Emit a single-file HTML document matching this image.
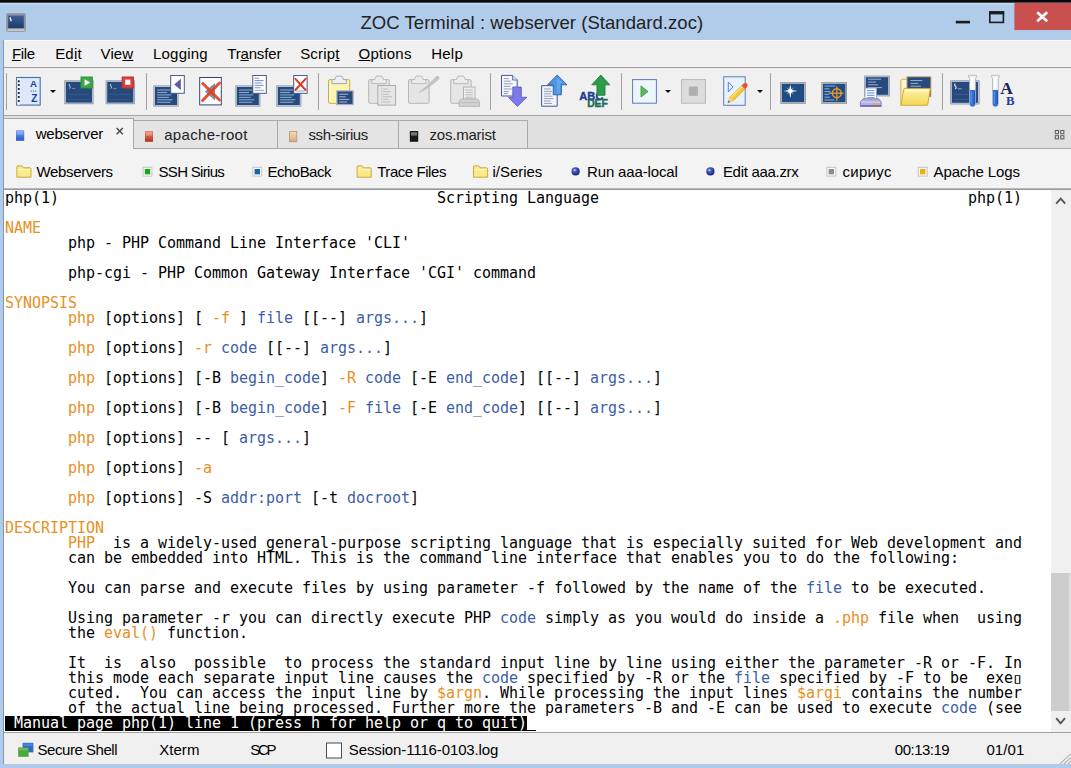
<!DOCTYPE html>
<html><head><meta charset="utf-8"><title>ZOC Terminal : webserver (Standard.zoc)</title>
<style>
html,body{margin:0;padding:0}
body{width:1071px;height:768px;overflow:hidden;position:relative;background:#b0ccea;font-family:'Liberation Sans', sans-serif}
.abs{position:absolute}
.lb{position:absolute;white-space:pre;line-height:normal}
.lb u{text-decoration:underline;text-underline-offset:1px}
#topblk{left:0;top:0;width:1071px;height:5px;background:linear-gradient(#0a0a0a 0,#0a0a0a 2.2px,#7f93aa 2.8px,#c2d8f1 3.4px,#b9d2ee 5px)}
#frameL{left:3px;top:40px;width:1px;height:724px;background:#8296ad}
#menubar{left:4px;top:40px;width:1067px;height:27px;background:#f1f1f1;border-top:1px solid #fafafa;box-sizing:border-box}
#menuline{left:4px;top:67px;width:1067px;height:1px;background:#9a9a9a}
#toolbar{left:4px;top:68px;width:1067px;height:47px;background:#f0f0f0}
#toolline{left:4px;top:115px;width:1067px;height:1px;background:#a6a6a6}
#tabbar{left:4px;top:116px;width:1067px;height:32px;background:#e0e0e0}
#tabline{left:4px;top:148px;width:1067px;height:1px;background:#a9a9a9}
#bmbar{left:4px;top:149px;width:1067px;height:39px;background:#f3f3f3}
#bmline{left:4px;top:188px;width:1067px;height:2px;background:linear-gradient(#c4c4c4,#8e8e8e);z-index:2}
#term{left:4px;top:189px;width:1047px;height:543px;background:#fff;overflow:hidden;font-family:'DejaVu Sans Mono', 'Liberation Mono', monospace;font-size:15px;letter-spacing:-0.031px;color:#000}
.row{position:absolute;left:1px;height:15px;line-height:15px;white-space:pre;margin-top:0px}
.o{color:#e8901c}.b{color:#3c5ea6}
.inv{background:#000;color:#fff;display:inline-block;height:15px}
.cur{display:inline-block;height:14px;border-bottom:1px solid #000;vertical-align:top}
.bx{font-size:14px;letter-spacing:0;display:inline-block;width:9px;text-align:center;transform:scaleX(1.45)}
#sbar{left:1051px;top:189px;width:20px;height:543px;background:#f0f0f0}
#thumb{left:1051px;top:573px;width:20px;height:138px;background:linear-gradient(90deg,#cdcdcd 0,#cdcdcd 18px,#dedede 18.5px)}
#termline{left:4px;top:732px;width:1067px;height:1px;background:#a0a0a0}
#status{left:4px;top:733px;width:1067px;height:31px;background:#f0f0f0}
.tab{position:absolute;top:120px;height:28px;background:#e4e4e4;border:1px solid #a9a9a9;border-bottom:none;box-sizing:border-box}
#tabA{position:absolute;left:4px;top:118px;width:130px;height:31px;background:#f3f3f3;border:1px solid #a9a9a9;border-bottom:none;border-left:none;box-sizing:border-box}
.sep{position:absolute;top:73px;width:1px;height:37px;background:#a0a0a0}
.dd{position:absolute;width:0;height:0;border-left:3px solid transparent;border-right:3px solid transparent;border-top:3.4px solid #111}
svg{position:absolute;overflow:visible}
</style></head>
<body>
<div class="abs" id="topblk"></div>
<div class="abs" id="frameL"></div>
<div class="abs" id="menubar"></div><div class="abs" id="menuline"></div>
<div class="abs" id="toolbar"></div><div class="abs" id="toolline"></div>
<div class="abs" id="tabbar"></div><div class="abs" id="tabline"></div>
<div class="abs" id="bmbar"></div><div class="abs" id="bmline"></div>
<div class="tab" style="left:133px;width:145px"></div><div class="tab" style="left:277px;width:122px"></div><div class="tab" style="left:398px;width:130px"></div>
<div id="tabA"></div>
<div class="abs" id="term">
<div class="row" style="top:2px">php(1)                                          Scripting Language                                         php(1)</div>
<div class="row" style="top:32px"><span class="o">NAME</span></div>
<div class="row" style="top:47px">       php - PHP Command Line Interface &#x27;CLI&#x27;</div>
<div class="row" style="top:77px">       php-cgi - PHP Common Gateway Interface &#x27;CGI&#x27; command</div>
<div class="row" style="top:107px"><span class="o">SYNOPSIS</span></div>
<div class="row" style="top:122px">       <span class="o">php</span> [options] [ <span class="o">-f</span> ] <span class="b">file</span> [[--] <span class="b">args...</span>]</div>
<div class="row" style="top:152px">       <span class="o">php</span> [options] <span class="o">-r</span> <span class="b">code</span> [[--] <span class="b">args...</span>]</div>
<div class="row" style="top:182px">       <span class="o">php</span> [options] [-B <span class="b">begin_code</span>] <span class="o">-R</span> <span class="b">code</span> [-E <span class="b">end_code</span>] [[--] <span class="b">args...</span>]</div>
<div class="row" style="top:212px">       <span class="o">php</span> [options] [-B <span class="b">begin_code</span>] <span class="o">-F</span> <span class="b">file</span> [-E <span class="b">end_code</span>] [[--] <span class="b">args...</span>]</div>
<div class="row" style="top:242px">       <span class="o">php</span> [options] -- [ <span class="b">args...</span>]</div>
<div class="row" style="top:272px">       <span class="o">php</span> [options] <span class="o">-a</span></div>
<div class="row" style="top:302px">       <span class="o">php</span> [options] -S <span class="b">addr:port</span> [-t <span class="b">docroot</span>]</div>
<div class="row" style="top:332px"><span class="o">DESCRIPTION</span></div>
<div class="row" style="top:347px">       <span class="o">PHP</span>  is a widely-used general-purpose scripting language that is especially suited for Web development and</div>
<div class="row" style="top:362px">       can be embedded into HTML. This is the command line interface that enables you to do the following:</div>
<div class="row" style="top:392px">       You can parse and execute files by using parameter -f followed by the name of the <span class="b">file</span> to be executed.</div>
<div class="row" style="top:422px">       Using parameter -r you can directly execute PHP <span class="b">code</span> simply as you would do inside a <span class="o">.php</span> file when  using</div>
<div class="row" style="top:437px">       the <span class="o">eval()</span> function.</div>
<div class="row" style="top:467px">       It  is  also  possible  to process the standard input line by line using either the parameter -R or -F. In</div>
<div class="row" style="top:482px">       this mode each separate input line causes the <span class="b">code</span> specified by -R or the <span class="b">file</span> specified by -F to be  exe<span class="bx">▯</span></div>
<div class="row" style="top:497px">       cuted.  You can access the input line by <span class="o">$argn</span>. While processing the input lines <span class="o">$argi</span> contains the number</div>
<div class="row" style="top:512px">       of the actual line being processed. Further more the parameters -B and -E can be used to execute <span class="b">code</span> (see</div>
<div class="row" style="top:527px"><span class="inv"> Manual page php(1) line 1 (press h for help or q to quit)</span><span class="cur"> </span></div>
</div>
<div class="abs" id="sbar"></div><div class="abs" id="thumb"></div>
<div class="abs" id="termline"></div><div class="abs" id="status"></div>
<div class="sep" style="left:6px"></div>
<div class="sep" style="left:146px"></div>
<div class="sep" style="left:318px"></div>
<div class="sep" style="left:490px"></div>
<div class="sep" style="left:621px"></div>
<div class="sep" style="left:770px"></div>
<div class="sep" style="left:942px"></div>
<div class="dd" style="left:50.4px;top:90px"></div>
<div class="dd" style="left:665.4px;top:90px"></div>
<div class="dd" style="left:756.5px;top:90px"></div>
<svg class="tbicons" style="left:0;top:0" width="1071" height="768" viewBox="0 0 1071 768" >
<rect x="16.60" y="77.50" width="23.60" height="27.60" fill="#dbe9f9" stroke="#4c6db0" stroke-width="1.1"/>
<rect x="17.10" y="78.00" width="3.20" height="26.60" fill="#eef5fd"/>
<rect x="17.80" y="80.40" width="1.90" height="1.80" fill="#15181f"/>
<line x1="15.60" y1="81.30" x2="17.80" y2="81.30" stroke="#b8bec8" stroke-width="0.9"/>
<rect x="17.80" y="84.10" width="1.90" height="1.80" fill="#15181f"/>
<line x1="15.60" y1="85.00" x2="17.80" y2="85.00" stroke="#b8bec8" stroke-width="0.9"/>
<rect x="17.80" y="88.10" width="1.90" height="1.80" fill="#15181f"/>
<line x1="15.60" y1="89.00" x2="17.80" y2="89.00" stroke="#b8bec8" stroke-width="0.9"/>
<rect x="17.80" y="92.10" width="1.90" height="1.80" fill="#15181f"/>
<line x1="15.60" y1="93.00" x2="17.80" y2="93.00" stroke="#b8bec8" stroke-width="0.9"/>
<rect x="17.80" y="96.10" width="1.90" height="1.80" fill="#15181f"/>
<line x1="15.60" y1="97.00" x2="17.80" y2="97.00" stroke="#b8bec8" stroke-width="0.9"/>
<rect x="17.80" y="100.10" width="1.90" height="1.80" fill="#15181f"/>
<line x1="15.60" y1="101.00" x2="17.80" y2="101.00" stroke="#b8bec8" stroke-width="0.9"/>
<text x="33.40" y="87.30" font-size="9.6" font-weight="bold" font-family="'Liberation Sans',sans-serif" fill="#1f3f9c" text-anchor="middle">A</text>
<rect x="30.70" y="90.60" width="1.00" height="1.20" fill="#3d62b4"/>
<rect x="32.90" y="90.60" width="1.00" height="1.20" fill="#3d62b4"/>
<rect x="35.10" y="90.60" width="1.00" height="1.20" fill="#3d62b4"/>
<text x="34.30" y="101.90" font-size="10" font-weight="bold" font-family="'Liberation Sans',sans-serif" fill="#1f3f9c" text-anchor="middle">Z</text>
<rect x="64.30" y="80.30" width="29.30" height="23.90" fill="#8f9bae"/>
<rect x="65.20" y="81.20" width="27.50" height="22.10" fill="#c6d1e0"/>
<rect x="65.90" y="81.90" width="26.10" height="20.70" fill="#27497b"/>
<path d="M69.70 83.90 q-1.4 0.9 0 2.2 q1.4 1.1 -0.2 2.4" fill="none" stroke="#d4deee" stroke-width="0.95"/>
<line x1="71.80" y1="88.60" x2="75.30" y2="88.60" stroke="#7f97bd" stroke-width="0.8"/>
<line x1="68.30" y1="94.30" x2="88.60" y2="94.30" stroke="#3d5f92" stroke-width="0.8"/>
<line x1="68.30" y1="99.30" x2="88.60" y2="99.30" stroke="#3d5f92" stroke-width="0.8"/>
<rect x="81.00" y="77.00" width="11.40" height="11.00" fill="#3aa84a"/>
<rect x="81.00" y="77.00" width="11.40" height="11.00" fill="none" stroke="#2f9640" stroke-width="1"/>
<path d="M84.6 79.2 L90.2 82.5 L84.6 85.8 Z" fill="#ffffff"/>
<rect x="105.60" y="80.30" width="29.30" height="23.90" fill="#8f9bae"/>
<rect x="106.50" y="81.20" width="27.50" height="22.10" fill="#c6d1e0"/>
<rect x="107.20" y="81.90" width="26.10" height="20.70" fill="#27497b"/>
<path d="M111.00 83.90 q-1.4 0.9 0 2.2 q1.4 1.1 -0.2 2.4" fill="none" stroke="#d4deee" stroke-width="0.95"/>
<line x1="113.10" y1="88.60" x2="116.60" y2="88.60" stroke="#7f97bd" stroke-width="0.8"/>
<line x1="109.60" y1="94.30" x2="129.90" y2="94.30" stroke="#3d5f92" stroke-width="0.8"/>
<line x1="109.60" y1="99.30" x2="129.90" y2="99.30" stroke="#3d5f92" stroke-width="0.8"/>
<rect x="122.20" y="77.00" width="11.20" height="11.00" fill="#d9403a"/>
<rect x="122.20" y="77.00" width="11.20" height="11.00" fill="none" stroke="#c8302c" stroke-width="1"/>
<rect x="125.20" y="79.60" width="5.20" height="5.20" fill="#ffffff"/>
<rect x="153.40" y="85.40" width="25.20" height="21.20" fill="#8f9bae"/>
<rect x="154.30" y="86.30" width="23.40" height="19.40" fill="#c6d1e0"/>
<rect x="155.00" y="87.00" width="22.00" height="18.00" fill="#27497b"/>
<line x1="157.20" y1="90.00" x2="170.23" y2="90.00" stroke="#8fb0d8" stroke-width="1.0"/>
<line x1="157.20" y1="92.45" x2="167.22" y2="92.45" stroke="#8fb0d8" stroke-width="1.0"/>
<line x1="157.20" y1="94.90" x2="171.40" y2="94.90" stroke="#8fb0d8" stroke-width="1.0"/>
<line x1="157.20" y1="97.35" x2="168.89" y2="97.35" stroke="#8fb0d8" stroke-width="1.0"/>
<line x1="157.20" y1="99.80" x2="172.56" y2="99.80" stroke="#8fb0d8" stroke-width="1.0"/>
<line x1="157.20" y1="102.25" x2="170.56" y2="102.25" stroke="#8fb0d8" stroke-width="1.0"/>
<rect x="170.70" y="75.50" width="13.60" height="17.80" fill="#ffffff" stroke="#4a5a8c" stroke-width="1"/>
<path d="M174.2 84.4 L180.8 78.8 L180.8 90 Z" fill="#5c5aa6"/>
<rect x="199.70" y="77.50" width="21.60" height="27.40" fill="#ffffff" stroke="#2f4478" stroke-width="1"/>
<path d="M204.8 91.6 L215 83 L215 100.6 Z" fill="#6f7fb6" opacity="0.9"/>
<line x1="202.80" y1="83.50" x2="219.40" y2="100.00" stroke="#e2401c" stroke-width="3.0" opacity="0.9" stroke-linecap="round"/>
<line x1="219.40" y1="83.00" x2="202.60" y2="100.50" stroke="#e2401c" stroke-width="3.0" opacity="0.9" stroke-linecap="round"/>
<rect x="235.30" y="85.40" width="25.10" height="21.20" fill="#8f9bae"/>
<rect x="236.20" y="86.30" width="23.30" height="19.40" fill="#c6d1e0"/>
<rect x="236.90" y="87.00" width="21.90" height="18.00" fill="#27497b"/>
<line x1="239.10" y1="90.00" x2="252.05" y2="90.00" stroke="#8fb0d8" stroke-width="1.0"/>
<line x1="239.10" y1="92.45" x2="249.06" y2="92.45" stroke="#8fb0d8" stroke-width="1.0"/>
<line x1="239.10" y1="94.90" x2="253.21" y2="94.90" stroke="#8fb0d8" stroke-width="1.0"/>
<line x1="239.10" y1="97.35" x2="250.72" y2="97.35" stroke="#8fb0d8" stroke-width="1.0"/>
<line x1="239.10" y1="99.80" x2="254.37" y2="99.80" stroke="#8fb0d8" stroke-width="1.0"/>
<line x1="239.10" y1="102.25" x2="252.38" y2="102.25" stroke="#8fb0d8" stroke-width="1.0"/>
<rect x="252.80" y="75.50" width="13.50" height="17.80" fill="#ffffff" stroke="#4a5a8c" stroke-width="1"/>
<line x1="254.60" y1="78.20" x2="259.10" y2="78.20" stroke="#6f8fc4" stroke-width="1.0"/>
<line x1="254.60" y1="80.60" x2="263.60" y2="80.60" stroke="#6f8fc4" stroke-width="1.0"/>
<line x1="254.60" y1="83.00" x2="262.10" y2="83.00" stroke="#6f8fc4" stroke-width="1.0"/>
<line x1="254.60" y1="85.40" x2="263.60" y2="85.40" stroke="#6f8fc4" stroke-width="1.0"/>
<line x1="254.60" y1="87.80" x2="260.60" y2="87.80" stroke="#6f8fc4" stroke-width="1.0"/>
<line x1="254.60" y1="90.40" x2="264.10" y2="90.40" stroke="#8aa6d2" stroke-width="1.0"/>
<rect x="276.30" y="85.40" width="25.10" height="21.20" fill="#8f9bae"/>
<rect x="277.20" y="86.30" width="23.30" height="19.40" fill="#c6d1e0"/>
<rect x="277.90" y="87.00" width="21.90" height="18.00" fill="#27497b"/>
<line x1="280.10" y1="90.00" x2="293.05" y2="90.00" stroke="#8fb0d8" stroke-width="1.0"/>
<line x1="280.10" y1="92.45" x2="290.06" y2="92.45" stroke="#8fb0d8" stroke-width="1.0"/>
<line x1="280.10" y1="94.90" x2="294.21" y2="94.90" stroke="#8fb0d8" stroke-width="1.0"/>
<line x1="280.10" y1="97.35" x2="291.72" y2="97.35" stroke="#8fb0d8" stroke-width="1.0"/>
<line x1="280.10" y1="99.80" x2="295.37" y2="99.80" stroke="#8fb0d8" stroke-width="1.0"/>
<line x1="280.10" y1="102.25" x2="293.38" y2="102.25" stroke="#8fb0d8" stroke-width="1.0"/>
<rect x="293.70" y="75.50" width="13.40" height="17.80" fill="#ffffff" stroke="#4a5a8c" stroke-width="1"/>
<line x1="296.30" y1="91.00" x2="304.60" y2="91.00" stroke="#8aa6d2" stroke-width="1"/>
<line x1="295.40" y1="78.80" x2="305.60" y2="90.00" stroke="#dc3a24" stroke-width="2.0" stroke-linecap="round"/>
<line x1="305.60" y1="78.80" x2="295.40" y2="90.00" stroke="#dc3a24" stroke-width="2.0" stroke-linecap="round"/>
<rect x="328.50" y="79.60" width="21.20" height="23.70" fill="#fdf4b2" stroke="#d3ad38" stroke-width="1" rx="1.5"/>
<path d="M331.80 83.60 L331.80 81.10 Q331.80 79.50 333.60 79.50 L334.90 79.50 L335.50 77.30 Q335.80 76.10 337.10 76.10 L341.10 76.10 Q342.40 76.10 342.70 77.30 L343.30 79.50 L344.60 79.50 Q346.40 79.50 346.40 81.10 L346.40 83.60 Z" fill="#eceff3" stroke="#98a1ae" stroke-width="0.9"/>
<line x1="330.50" y1="84.00" x2="330.50" y2="101.00" stroke="#fffbe0" stroke-width="1.2"/>
<rect x="336.20" y="90.20" width="17.60" height="15.00" fill="#a9b2bf"/>
<rect x="337.50" y="91.50" width="15.00" height="12.40" fill="#27497b"/>
<line x1="339.20" y1="94.20" x2="348.20" y2="94.20" stroke="#a9bddb" stroke-width="1.0"/>
<line x1="339.20" y1="96.80" x2="345.70" y2="96.80" stroke="#a9bddb" stroke-width="1.0"/>
<line x1="339.20" y1="99.40" x2="349.20" y2="99.40" stroke="#a9bddb" stroke-width="1.0"/>
<line x1="339.20" y1="102.00" x2="347.20" y2="102.00" stroke="#a9bddb" stroke-width="1.0"/>
<rect x="368.70" y="79.60" width="20.60" height="23.70" fill="#e6e6e6" stroke="#b6b6b6" stroke-width="1" rx="1.5"/>
<path d="M371.70 83.60 L371.70 81.10 Q371.70 79.50 373.50 79.50 L374.80 79.50 L375.40 77.30 Q375.70 76.10 377.00 76.10 L381.00 76.10 Q382.30 76.10 382.60 77.30 L383.20 79.50 L384.50 79.50 Q386.30 79.50 386.30 81.10 L386.30 83.60 Z" fill="#ececec" stroke="#b4b4b4" stroke-width="0.9"/>
<rect x="377.80" y="85.50" width="17.80" height="19.60" fill="#e6e6e6" stroke="#aaaaaa" stroke-width="1"/>
<line x1="383.00" y1="89.00" x2="388.00" y2="89.00" stroke="#bdbdbd" stroke-width="1"/>
<line x1="383.00" y1="91.60" x2="391.00" y2="91.60" stroke="#bdbdbd" stroke-width="1"/>
<line x1="383.00" y1="94.20" x2="389.00" y2="94.20" stroke="#bdbdbd" stroke-width="1"/>
<line x1="383.00" y1="96.80" x2="392.00" y2="96.80" stroke="#bdbdbd" stroke-width="1"/>
<line x1="383.00" y1="99.40" x2="388.50" y2="99.40" stroke="#bdbdbd" stroke-width="1"/>
<line x1="383.00" y1="102.00" x2="390.50" y2="102.00" stroke="#bdbdbd" stroke-width="1"/>
<line x1="381.80" y1="87.50" x2="381.80" y2="103.50" stroke="#c8c8c8" stroke-width="0.8"/>
<rect x="408.50" y="79.60" width="20.60" height="23.70" fill="#e6e6e6" stroke="#b6b6b6" stroke-width="1" rx="1.5"/>
<path d="M411.50 83.60 L411.50 81.10 Q411.50 79.50 413.30 79.50 L414.60 79.50 L415.20 77.30 Q415.50 76.10 416.80 76.10 L420.80 76.10 Q422.10 76.10 422.40 77.30 L423.00 79.50 L424.30 79.50 Q426.10 79.50 426.10 81.10 L426.10 83.60 Z" fill="#ececec" stroke="#b4b4b4" stroke-width="0.9"/>
<path d="M419 92.4 Q424 89.5 433.2 79.6 L436 77 Q438.2 75.6 439 77 Q439.6 78.6 437.6 80.2 L434.6 82.6 Q427 89.6 419 92.4 Z" fill="#c4c4c4" stroke="#b6b6b6" stroke-width="0.6"/>
<rect x="450.70" y="79.60" width="20.40" height="23.70" fill="#e6e6e6" stroke="#b6b6b6" stroke-width="1" rx="1.5"/>
<path d="M453.60 83.60 L453.60 81.10 Q453.60 79.50 455.40 79.50 L456.70 79.50 L457.30 77.30 Q457.60 76.10 458.90 76.10 L462.90 76.10 Q464.20 76.10 464.50 77.30 L465.10 79.50 L466.40 79.50 Q468.20 79.50 468.20 81.10 L468.20 83.60 Z" fill="#ececec" stroke="#b4b4b4" stroke-width="0.9"/>
<rect x="463.50" y="87.00" width="11.50" height="12.00" fill="#ececec" stroke="#b4b4b4" stroke-width="1"/>
<line x1="465.60" y1="90.00" x2="473.00" y2="90.00" stroke="#bcbcbc" stroke-width="1"/>
<line x1="465.60" y1="92.40" x2="473.00" y2="92.40" stroke="#bcbcbc" stroke-width="1"/>
<line x1="465.60" y1="94.80" x2="473.00" y2="94.80" stroke="#bcbcbc" stroke-width="1"/>
<line x1="465.60" y1="97.20" x2="473.00" y2="97.20" stroke="#bcbcbc" stroke-width="1"/>
<path d="M461 99 L477.6 99 L479.6 101.5 L479.6 106.4 L459 106.4 L459 101.5 Z" fill="#d2d2d2" stroke="#b0b0b0" stroke-width="0.8"/>
<line x1="460.00" y1="102.60" x2="478.60" y2="102.60" stroke="#bdbdbd" stroke-width="1"/>
<path d="M501.5 75.4 L512.6 75.4 L517.2 80 L517.2 96 L501.5 96 Z" fill="#f4f7fd" stroke="#46568e" stroke-width="1"/>
<path d="M512.6 75.4 L512.6 80 L517.2 80" fill="#dfe6f5" stroke="#46568e" stroke-width="0.8"/>
<line x1="503.80" y1="78.60" x2="508.80" y2="78.60" stroke="#8a93ac" stroke-width="0.9"/>
<line x1="503.80" y1="81.20" x2="510.80" y2="81.20" stroke="#8a93ac" stroke-width="0.9"/>
<line x1="503.80" y1="83.80" x2="512.80" y2="83.80" stroke="#8a93ac" stroke-width="0.9"/>
<line x1="503.80" y1="86.40" x2="510.30" y2="86.40" stroke="#8a93ac" stroke-width="0.9"/>
<line x1="503.80" y1="89.00" x2="511.80" y2="89.00" stroke="#8a93ac" stroke-width="0.9"/>
<line x1="503.80" y1="91.60" x2="508.80" y2="91.60" stroke="#8a93ac" stroke-width="0.9"/>
<line x1="503.80" y1="93.60" x2="507.80" y2="93.60" stroke="#8a93ac" stroke-width="0.9"/>
<path d="M512.8 87 L521.3 87 L521.3 97.3 L526.8 97.3 L517.4 106.4 L508.4 97.3 L512.8 97.3 Z" fill="#7d7aea" stroke="#605cc6" stroke-width="0.9"/>
<path d="M541.6 85.7 L557.2 85.7 L557.2 106.2 L541.6 106.2 Z" fill="#f4f7fd" stroke="#46568e" stroke-width="1"/>
<line x1="544.00" y1="89.00" x2="551.00" y2="89.00" stroke="#8a93ac" stroke-width="0.9"/>
<line x1="544.00" y1="91.40" x2="552.00" y2="91.40" stroke="#8a93ac" stroke-width="0.9"/>
<line x1="544.00" y1="93.80" x2="551.00" y2="93.80" stroke="#8a93ac" stroke-width="0.9"/>
<line x1="544.00" y1="96.20" x2="552.50" y2="96.20" stroke="#8a93ac" stroke-width="0.9"/>
<line x1="544.00" y1="98.60" x2="553.50" y2="98.60" stroke="#8a93ac" stroke-width="0.9"/>
<line x1="544.00" y1="101.00" x2="551.00" y2="101.00" stroke="#8a93ac" stroke-width="0.9"/>
<line x1="544.00" y1="103.40" x2="552.00" y2="103.40" stroke="#8a93ac" stroke-width="0.9"/>
<path d="M557.2 75 L567 84.8 L561.4 84.8 L561.4 94.8 L553.2 94.8 L553.2 84.8 L547.6 84.8 Z" fill="#4c96e4" stroke="#2b5fae" stroke-width="0.9"/>
<path d="M557.2 77.5 L562.8 83.3 L559.8 83.3 L559.8 93.2 L557.2 93.2 Z" fill="#6eb0f0" opacity="0.7"/>
<text x="579.20" y="99.70" font-size="11" font-weight="bold" font-family="'Liberation Sans',sans-serif" fill="#1d3a94" text-anchor="start" letter-spacing="0.2" stroke="#1d3a94" stroke-width="0.4">ABC</text>
<path d="M600.8 75 L609.8 84.8 L605 84.8 L605 95.2 L597 95.2 L597 84.8 L591.8 84.8 Z" fill="#2b9c4a" stroke="#1d7c3a" stroke-width="0.9"/>
<text x="587.20" y="106.50" font-size="10.4" font-weight="bold" font-family="'Liberation Sans',sans-serif" fill="#1c6a5e" text-anchor="start" letter-spacing="-0.1" stroke="#1c6a5e" stroke-width="0.4">DEF</text>
<rect x="632.60" y="79.60" width="23.80" height="23.60" fill="#eef5fd" stroke="#5c7db4" stroke-width="1"/>
<path d="M641 86 L648 91.5 L641 97 Z" fill="#5cba5c" stroke="#3c9c40" stroke-width="0.9"/>
<rect x="681.60" y="79.60" width="23.80" height="23.60" fill="#dddddd" stroke="#b9b9b9" stroke-width="1"/>
<rect x="688.80" y="86.60" width="9.20" height="9.20" fill="#b2b2b2"/>
<line x1="691.10" y1="86.60" x2="691.10" y2="95.80" stroke="#a9a9a9" stroke-width="0.6"/>
<line x1="693.40" y1="86.60" x2="693.40" y2="95.80" stroke="#a9a9a9" stroke-width="0.6"/>
<line x1="695.70" y1="86.60" x2="695.70" y2="95.80" stroke="#a9a9a9" stroke-width="0.6"/>
<rect x="723.70" y="76.80" width="21.50" height="28.50" fill="#e9f2fc" stroke="#5c7db4" stroke-width="1"/>
<path d="M728.3 82 L733 87 L728.3 92 Z" fill="#eaf3fd" stroke="#4f86d6" stroke-width="1"/>
<path d="M727.8 102.8 L729.8 97.2 L741.6 85.6 L745.2 89.0 L733.4 100.8 Z" fill="#f4c534" stroke="#d9a21c" stroke-width="0.6"/>
<path d="M730.6 96.6 L742.2 85.2 L743.6 86.4 L731.6 98.2 Z" fill="#fbe27a" opacity="0.9"/>
<path d="M727.8 102.8 L729.8 97.2 L733.4 100.8 Z" fill="#f1d9a4"/>
<path d="M727.8 102.8 L728.6 100.6 L730 102 Z" fill="#5a4a30"/>
<path d="M741.6 85.6 L743.6 83.6 Q745.6 82.2 747 83.6 Q748.4 85.2 747 87 L745.2 89.0 Z" fill="#ee4a38"/>
<rect x="780.20" y="82.20" width="25.60" height="21.60" fill="#9a9088"/>
<rect x="781.10" y="83.10" width="23.80" height="19.80" fill="#c6d1e0"/>
<rect x="781.80" y="83.80" width="22.40" height="18.40" fill="#1f4c84"/>
<path d="M790.3 84.2 L791.4 89.9 L797.6 91 L791.4 92.1 L790.3 98.2 L789.2 92.1 L783.4 91 L789.2 89.9 Z" fill="#ffffff"/>
<path d="M786.2 86.9 L790.3 90.2 L794.4 86.9 L791.2 91 L794.4 95.1 L790.3 91.8 L786.2 95.1 L789.4 91 Z" fill="#dfe8f6" opacity="0.85"/>
<circle cx="790.30" cy="91.00" r="2.00" fill="#ffffff"/>
<rect x="821.30" y="82.20" width="25.70" height="21.60" fill="#9a9088"/>
<rect x="822.20" y="83.10" width="23.90" height="19.80" fill="#c6d1e0"/>
<rect x="822.90" y="83.80" width="22.50" height="18.40" fill="#1f4c84"/>
<line x1="824.40" y1="86.00" x2="835.40" y2="86.00" stroke="#9fbadf" stroke-width="0.9"/>
<line x1="824.40" y1="88.80" x2="829.40" y2="88.80" stroke="#9fbadf" stroke-width="0.9"/>
<line x1="824.40" y1="91.60" x2="830.40" y2="91.60" stroke="#9fbadf" stroke-width="0.9"/>
<line x1="824.40" y1="94.40" x2="828.90" y2="94.40" stroke="#9fbadf" stroke-width="0.9"/>
<line x1="824.40" y1="97.20" x2="829.90" y2="97.20" stroke="#9fbadf" stroke-width="0.9"/>
<line x1="824.40" y1="100.00" x2="834.40" y2="100.00" stroke="#9fbadf" stroke-width="0.9"/>
<circle cx="836.80" cy="93.20" r="4.40" fill="none" stroke="#f0961e" stroke-width="1.5"/>
<line x1="828.80" y1="93.20" x2="843.60" y2="93.20" stroke="#f0961e" stroke-width="1.3"/>
<line x1="836.80" y1="86.40" x2="836.80" y2="100.80" stroke="#f0961e" stroke-width="1.3"/>
<rect x="864.20" y="75.60" width="25.60" height="20.80" fill="#8f9bae"/>
<rect x="865.10" y="76.50" width="23.80" height="19.00" fill="#c6d1e0"/>
<rect x="865.80" y="77.20" width="22.40" height="17.60" fill="#27497b"/>
<line x1="868.00" y1="79.20" x2="881.00" y2="79.20" stroke="#a9bddb" stroke-width="0.9"/>
<line x1="868.00" y1="82.00" x2="876.00" y2="82.00" stroke="#a9bddb" stroke-width="0.9"/>
<line x1="868.00" y1="84.80" x2="878.00" y2="84.80" stroke="#a9bddb" stroke-width="0.9"/>
<line x1="868.00" y1="87.60" x2="882.00" y2="87.60" stroke="#a9bddb" stroke-width="0.9"/>
<line x1="868.00" y1="90.40" x2="877.00" y2="90.40" stroke="#a9bddb" stroke-width="0.9"/>
<rect x="865.00" y="88.00" width="11.40" height="12.50" fill="#f6f8fd" stroke="#8f98c8" stroke-width="0.8"/>
<line x1="867.00" y1="90.60" x2="874.40" y2="90.60" stroke="#6f9fe0" stroke-width="1.1"/>
<line x1="867.00" y1="93.00" x2="874.40" y2="93.00" stroke="#6f9fe0" stroke-width="1.1"/>
<line x1="867.00" y1="95.40" x2="874.40" y2="95.40" stroke="#6f9fe0" stroke-width="1.1"/>
<line x1="867.00" y1="97.60" x2="874.40" y2="97.60" stroke="#6f9fe0" stroke-width="1.1"/>
<path d="M863 98.8 L878.6 98.8 L881.2 102 L881.2 106.4 L860.4 106.4 L860.4 102 Z" fill="#b2b0e2" stroke="#6c6ab2" stroke-width="0.8"/>
<line x1="861.00" y1="102.20" x2="880.60" y2="102.20" stroke="#d6d5f0" stroke-width="1"/>
<line x1="860.60" y1="105.80" x2="881.00" y2="105.80" stroke="#5e5ca6" stroke-width="1.1"/>
<rect x="873.00" y="103.40" width="5.60" height="1.50" fill="#f0a838"/>
<path d="M900.9 80.6 Q900.9 79.2 902.3 79.2 L907 79.2 L908.6 81.4 L926 81.4 L926 104.6 L900.9 104.6 Z" fill="#fff6d6" stroke="#d2a640" stroke-width="1.0"/>
<rect x="906.50" y="76.30" width="24.80" height="20.80" fill="#b89c64"/>
<rect x="907.50" y="77.30" width="22.80" height="18.80" fill="#27497b"/>
<line x1="910.40" y1="80.60" x2="922.40" y2="80.60" stroke="#a9bddb" stroke-width="0.9"/>
<line x1="910.40" y1="83.40" x2="918.40" y2="83.40" stroke="#a9bddb" stroke-width="0.9"/>
<line x1="910.40" y1="86.20" x2="920.90" y2="86.20" stroke="#a9bddb" stroke-width="0.9"/>
<path d="M904 88.4 L930.4 88.4 L927.6 105.3 L900.9 105.3 Z" fill="url(#gfold)" stroke="#cfa630" stroke-width="0.9"/>
<path d="M905 89.6 L929.2 89.6 L928.8 91.6 L904.6 91.6 Z" fill="#fffbe0" opacity="0.7"/>
<rect x="950.10" y="80.20" width="29.60" height="24.30" fill="#8f9bae" rx="1"/>
<rect x="951.00" y="81.10" width="27.80" height="22.50" fill="#c6d1e0"/>
<rect x="951.80" y="81.90" width="26.20" height="20.90" fill="#27497b"/>
<path d="M955.4 83.8 q-1.6 1 0 2.4 q1.6 1.2 -0.2 2.6" fill="none" stroke="#e8eef8" stroke-width="1.1"/>
<line x1="957.60" y1="88.80" x2="961.60" y2="88.80" stroke="#9fb2d0" stroke-width="0.9"/>
<line x1="954.00" y1="94.50" x2="968.00" y2="94.50" stroke="#3d5f92" stroke-width="0.8"/>
<line x1="954.00" y1="99.50" x2="968.00" y2="99.50" stroke="#3d5f92" stroke-width="0.8"/>
<path d="M968.70 75.3 L976.40 75.3 L976.40 77 L975.60 78.4 L975.60 103.6 Q975.60 106.8 972.55 106.8 Q969.50 106.8 969.50 103.6 L969.50 78.4 L968.70 77 Z" fill="#f2f4f8" stroke="#a9b0be" stroke-width="0.8"/>
<path d="M969.90 90 L975.20 90 L975.20 103.4 Q975.20 106.3 972.55 106.3 Q969.90 106.3 969.90 103.4 Z" fill="#2f6fd6"/>
<line x1="971.20" y1="91.50" x2="971.20" y2="104.00" stroke="#5c94ea" stroke-width="1.2"/>
<line x1="974.50" y1="91.00" x2="974.50" y2="104.00" stroke="#1f55b4" stroke-width="1.0"/>
<line x1="972.15" y1="77.40" x2="972.15" y2="89.40" stroke="#ffffff" stroke-width="1.6"/>
<path d="M991.70 75.3 L999.20 75.3 L999.20 77 L998.40 78.4 L998.40 103.6 Q998.40 106.8 995.45 106.8 Q992.50 106.8 992.50 103.6 L992.50 78.4 L991.70 77 Z" fill="#f2f4f8" stroke="#a9b0be" stroke-width="0.8"/>
<path d="M992.90 90 L998.00 90 L998.00 103.4 Q998.00 106.3 995.45 106.3 Q992.90 106.3 992.90 103.4 Z" fill="#2f6fd6"/>
<line x1="994.20" y1="91.50" x2="994.20" y2="104.00" stroke="#5c94ea" stroke-width="1.2"/>
<line x1="997.30" y1="91.00" x2="997.30" y2="104.00" stroke="#1f55b4" stroke-width="1.0"/>
<line x1="995.05" y1="77.40" x2="995.05" y2="89.40" stroke="#ffffff" stroke-width="1.6"/>
<text x="1006.60" y="94.40" font-size="17.5" font-weight="bold" font-family="'Liberation Serif',serif" fill="#1d1d5e" text-anchor="middle">A</text>
<text x="1010.20" y="104.90" font-size="12.8" font-weight="bold" font-family="'Liberation Serif',serif" fill="#1c3ca4" text-anchor="middle">B</text>
<rect x="1014.40" y="3.00" width="56.60" height="27.00" fill="#c9504e"/>
<line x1="1037.20" y1="12.20" x2="1047.20" y2="21.20" stroke="#ffffff" stroke-width="2.6"/>
<line x1="1047.20" y1="12.20" x2="1037.20" y2="21.20" stroke="#ffffff" stroke-width="2.6"/>
<rect x="955.80" y="20.80" width="14.20" height="2.60" fill="#1c1c1c"/>
<rect x="989.80" y="12.20" width="13.60" height="10.20" fill="none" stroke="#1c1c1c" stroke-width="1.6"/>
<rect x="989.00" y="11.20" width="15.20" height="3.20" fill="#1c1c1c"/>
<rect x="6.20" y="13.20" width="19.60" height="18.60" fill="#8b909c" rx="1.5"/>
<defs><linearGradient id="gscr" x1="0" y1="0" x2="0" y2="1"><stop offset="0" stop-color="#3f5f95"/><stop offset="1" stop-color="#1c3c6c"/></linearGradient><linearGradient id="gfold" x1="0" y1="0" x2="0" y2="1"><stop offset="0" stop-color="#fdf3ae"/><stop offset="1" stop-color="#f3d752"/></linearGradient><linearGradient id="gtb" x1="0" y1="0" x2="0" y2="1"><stop offset="0" stop-color="#7aa4f4"/><stop offset="1" stop-color="#2556d0"/></linearGradient><linearGradient id="gtr" x1="0" y1="0" x2="0" y2="1"><stop offset="0" stop-color="#e88878"/><stop offset="1" stop-color="#b83018"/></linearGradient><linearGradient id="gtbe" x1="0" y1="0" x2="0" y2="1"><stop offset="0" stop-color="#f6dcc0"/><stop offset="1" stop-color="#d8a878"/></linearGradient><radialGradient id="gball" cx="0.4" cy="0.35" r="0.7"><stop offset="0" stop-color="#5a7ae0"/><stop offset="1" stop-color="#0c1c70"/></radialGradient></defs>
<rect x="8.20" y="15.60" width="15.60" height="12.60" fill="url(#gscr)"/>
<rect x="7.40" y="28.80" width="17.20" height="2.20" fill="#c4c6c8"/>
<path d="M10.6 17.4 q-1 0.8 0 1.8 q1 0.9 -0.1 2" fill="none" stroke="#ffffff" stroke-width="1.2"/>
<rect x="16.00" y="130.20" width="8.20" height="10.60" fill="url(#gtb)"/>
<rect x="17.00" y="131.20" width="6.20" height="3.40" fill="#9cc0fa" opacity="0.55"/>
<rect x="145.00" y="131.00" width="8.00" height="10.80" fill="url(#gtr)"/>
<rect x="146.00" y="132.00" width="6.00" height="3.60" fill="#f2b0a4" opacity="0.6"/>
<rect x="289.40" y="131.40" width="7.40" height="10.40" fill="url(#gtbe)" stroke="#b89870" stroke-width="0.8"/>
<rect x="409.80" y="131.00" width="8.40" height="10.80" fill="#1a1a1a"/>
<rect x="411.00" y="132.20" width="6.00" height="3.40" fill="#8a8a8a" opacity="0.8"/>
<line x1="116.60" y1="128.00" x2="122.80" y2="134.20" stroke="#4a4a4a" stroke-width="1.5"/>
<line x1="122.80" y1="128.00" x2="116.60" y2="134.20" stroke="#4a4a4a" stroke-width="1.5"/>
<rect x="1055.30" y="130.50" width="3.20" height="3.20" fill="none" stroke="#5a5a5a" stroke-width="1"/>
<rect x="1060.70" y="130.50" width="3.20" height="3.20" fill="none" stroke="#5a5a5a" stroke-width="1"/>
<rect x="1055.30" y="135.70" width="3.20" height="3.20" fill="none" stroke="#5a5a5a" stroke-width="1"/>
<rect x="1060.70" y="135.70" width="3.20" height="3.20" fill="none" stroke="#5a5a5a" stroke-width="1"/>
<path d="M16.90 166.8 Q16.90 165.8 17.90 165.8 L21.90 165.8 L23.40 167.8 L30.00 167.8 Q31.00 167.8 31.00 168.8 L31.00 177.2 L16.90 177.2 Z" fill="#f9ea8c" stroke="#c9a93c" stroke-width="1"/>
<line x1="17.80" y1="169.60" x2="30.20" y2="169.60" stroke="#fdf6c2" stroke-width="1.2"/>
<path d="M357.10 166.8 Q357.10 165.8 358.10 165.8 L362.10 165.8 L363.60 167.8 L370.20 167.8 Q371.20 167.8 371.20 168.8 L371.20 177.2 L357.10 177.2 Z" fill="#f9ea8c" stroke="#c9a93c" stroke-width="1"/>
<line x1="358.00" y1="169.60" x2="370.40" y2="169.60" stroke="#fdf6c2" stroke-width="1.2"/>
<path d="M473.50 166.8 Q473.50 165.8 474.50 165.8 L478.50 165.8 L480.00 167.8 L486.60 167.8 Q487.60 167.8 487.60 168.8 L487.60 177.2 L473.50 177.2 Z" fill="#f9ea8c" stroke="#c9a93c" stroke-width="1"/>
<line x1="474.40" y1="169.60" x2="486.80" y2="169.60" stroke="#fdf6c2" stroke-width="1.2"/>
<rect x="143.10" y="167.30" width="8.80" height="8.80" fill="#fdfdfd" stroke="#c4c4c4" stroke-width="1"/>
<rect x="144.80" y="169.00" width="5.40" height="5.40" fill="#16a616"/>
<rect x="252.90" y="167.30" width="8.80" height="8.80" fill="#fdfdfd" stroke="#c4c4c4" stroke-width="1"/>
<rect x="254.60" y="169.00" width="5.40" height="5.40" fill="#1464b4"/>
<rect x="826.90" y="167.30" width="8.80" height="8.80" fill="#fdfdfd" stroke="#c4c4c4" stroke-width="1"/>
<rect x="828.60" y="169.00" width="5.40" height="5.40" fill="#8c8c8c"/>
<rect x="918.30" y="167.30" width="8.80" height="8.80" fill="#fdfdfd" stroke="#c4c4c4" stroke-width="1"/>
<rect x="920.00" y="169.00" width="5.40" height="5.40" fill="#f0b400"/>
<circle cx="575.60" cy="171.40" r="4.10" fill="url(#gball)"/>
<circle cx="710.40" cy="171.40" r="4.10" fill="url(#gball)"/>
<circle cx="574.60" cy="170.20" r="1.10" fill="#c8d4fa" opacity="0.8"/>
<circle cx="709.40" cy="170.20" r="1.10" fill="#c8d4fa" opacity="0.8"/>
<rect x="22.60" y="742.80" width="10.80" height="9.60" fill="#2b6bca"/>
<rect x="23.40" y="743.60" width="9.20" height="2.40" fill="#5a92e2" opacity="0.7"/>
<rect x="18.20" y="747.40" width="10.40" height="9.40" fill="#4aa93a"/>
<rect x="19.00" y="748.20" width="8.80" height="2.20" fill="#7cc86c" opacity="0.7"/>
<rect x="326.50" y="743.00" width="15.00" height="15.00" fill="#ffffff" stroke="#4a4a4a" stroke-width="1"/>
<path d="M1056.2 203.6 L1060.7 198.6 L1065.2 203.6" fill="none" stroke="#565656" stroke-width="1.9"/>
<path d="M1056.2 718.2 L1060.6 723.4 L1065 718.2" fill="none" stroke="#565656" stroke-width="1.9"/>
<line x1="1059.80" y1="764.00" x2="1071.00" y2="753.60" stroke="#b4b4b4" stroke-width="1.1"/>
<line x1="1063.80" y1="764.00" x2="1071.00" y2="757.40" stroke="#b4b4b4" stroke-width="1.1"/>
<line x1="1067.80" y1="764.00" x2="1071.00" y2="761.20" stroke="#b4b4b4" stroke-width="1.1"/>
</svg>
<span class="lb" style="left:360.5px;top:12.2px;font-size:18.5px;letter-spacing:0.042px;color:#222">ZOC Terminal : webserver (Standard.zoc)</span>
<span class="lb" style="left:11.9px;top:45.2px;font-size:15px;letter-spacing:-0.324px;color:#000"><u>F</u>ile</span>
<span class="lb" style="left:55.2px;top:45.2px;font-size:15px;letter-spacing:0.180px;color:#000">Ed<u>i</u>t</span>
<span class="lb" style="left:100.5px;top:45.2px;font-size:15px;letter-spacing:0.150px;color:#000">Vie<u>w</u></span>
<span class="lb" style="left:153.0px;top:45.2px;font-size:15px;letter-spacing:0.202px;color:#000">Lo<u>g</u>ging</span>
<span class="lb" style="left:227.2px;top:45.2px;font-size:15px;letter-spacing:-0.157px;color:#000">Tr<u>a</u>nsfer</span>
<span class="lb" style="left:300.2px;top:45.2px;font-size:15px;letter-spacing:0.171px;color:#000">Scrip<u>t</u></span>
<span class="lb" style="left:358.5px;top:45.2px;font-size:15px;letter-spacing:0.199px;color:#000"><u>O</u>ptions</span>
<span class="lb" style="left:431.2px;top:45.2px;font-size:15px;letter-spacing:0.247px;color:#000">Help</span>
<span class="lb" style="left:35.7px;top:125.4px;font-size:15px;letter-spacing:-0.200px;color:#000">webserver</span>
<span class="lb" style="left:164.2px;top:126.4px;font-size:15px;letter-spacing:0.314px;color:#222">apache-root</span>
<span class="lb" style="left:308.5px;top:126.4px;font-size:15px;letter-spacing:-0.394px;color:#222">ssh-sirius</span>
<span class="lb" style="left:429.5px;top:126.4px;font-size:15px;letter-spacing:-0.216px;color:#222">zos.marist</span>
<span class="lb" style="left:36.5px;top:163.4px;font-size:15px;letter-spacing:-0.350px;color:#000">Webservers</span>
<span class="lb" style="left:158.5px;top:163.4px;font-size:15px;letter-spacing:-0.692px;color:#000">SSH Sirius</span>
<span class="lb" style="left:267.6px;top:163.4px;font-size:15px;letter-spacing:-0.535px;color:#000">EchoBack</span>
<span class="lb" style="left:377.2px;top:163.4px;font-size:15px;letter-spacing:-0.442px;color:#000">Trace Files</span>
<span class="lb" style="left:492.6px;top:163.4px;font-size:15px;letter-spacing:-0.062px;color:#000">i/Series</span>
<span class="lb" style="left:587.0px;top:163.4px;font-size:15px;letter-spacing:-0.147px;color:#000">Run aaa-local</span>
<span class="lb" style="left:722.9px;top:163.4px;font-size:15px;letter-spacing:-0.302px;color:#000">Edit aaa.zrx</span>
<span class="lb" style="left:842.5px;top:163.4px;font-size:15px;letter-spacing:0.293px;color:#000">сириус</span>
<span class="lb" style="left:933.5px;top:163.4px;font-size:15px;letter-spacing:-0.108px;color:#000">Apache Logs</span>
<span class="lb" style="left:37.5px;top:741.4px;font-size:15px;letter-spacing:-0.451px;color:#000">Secure Shell</span>
<span class="lb" style="left:159.2px;top:741.4px;font-size:15px;letter-spacing:0.046px;color:#000">Xterm</span>
<span class="lb" style="left:250.2px;top:741.4px;font-size:15px;letter-spacing:-2.222px;color:#000">SCP</span>
<span class="lb" style="left:348.8px;top:741.4px;font-size:15px;letter-spacing:-0.123px;color:#000">Session-1116-0103.log</span>
<span class="lb" style="left:894.8px;top:741.4px;font-size:15px;letter-spacing:-0.499px;color:#000">00:13:19</span>
<span class="lb" style="left:986.4px;top:741.4px;font-size:15px;letter-spacing:0.113px;color:#000">01/01</span>
</body></html>
